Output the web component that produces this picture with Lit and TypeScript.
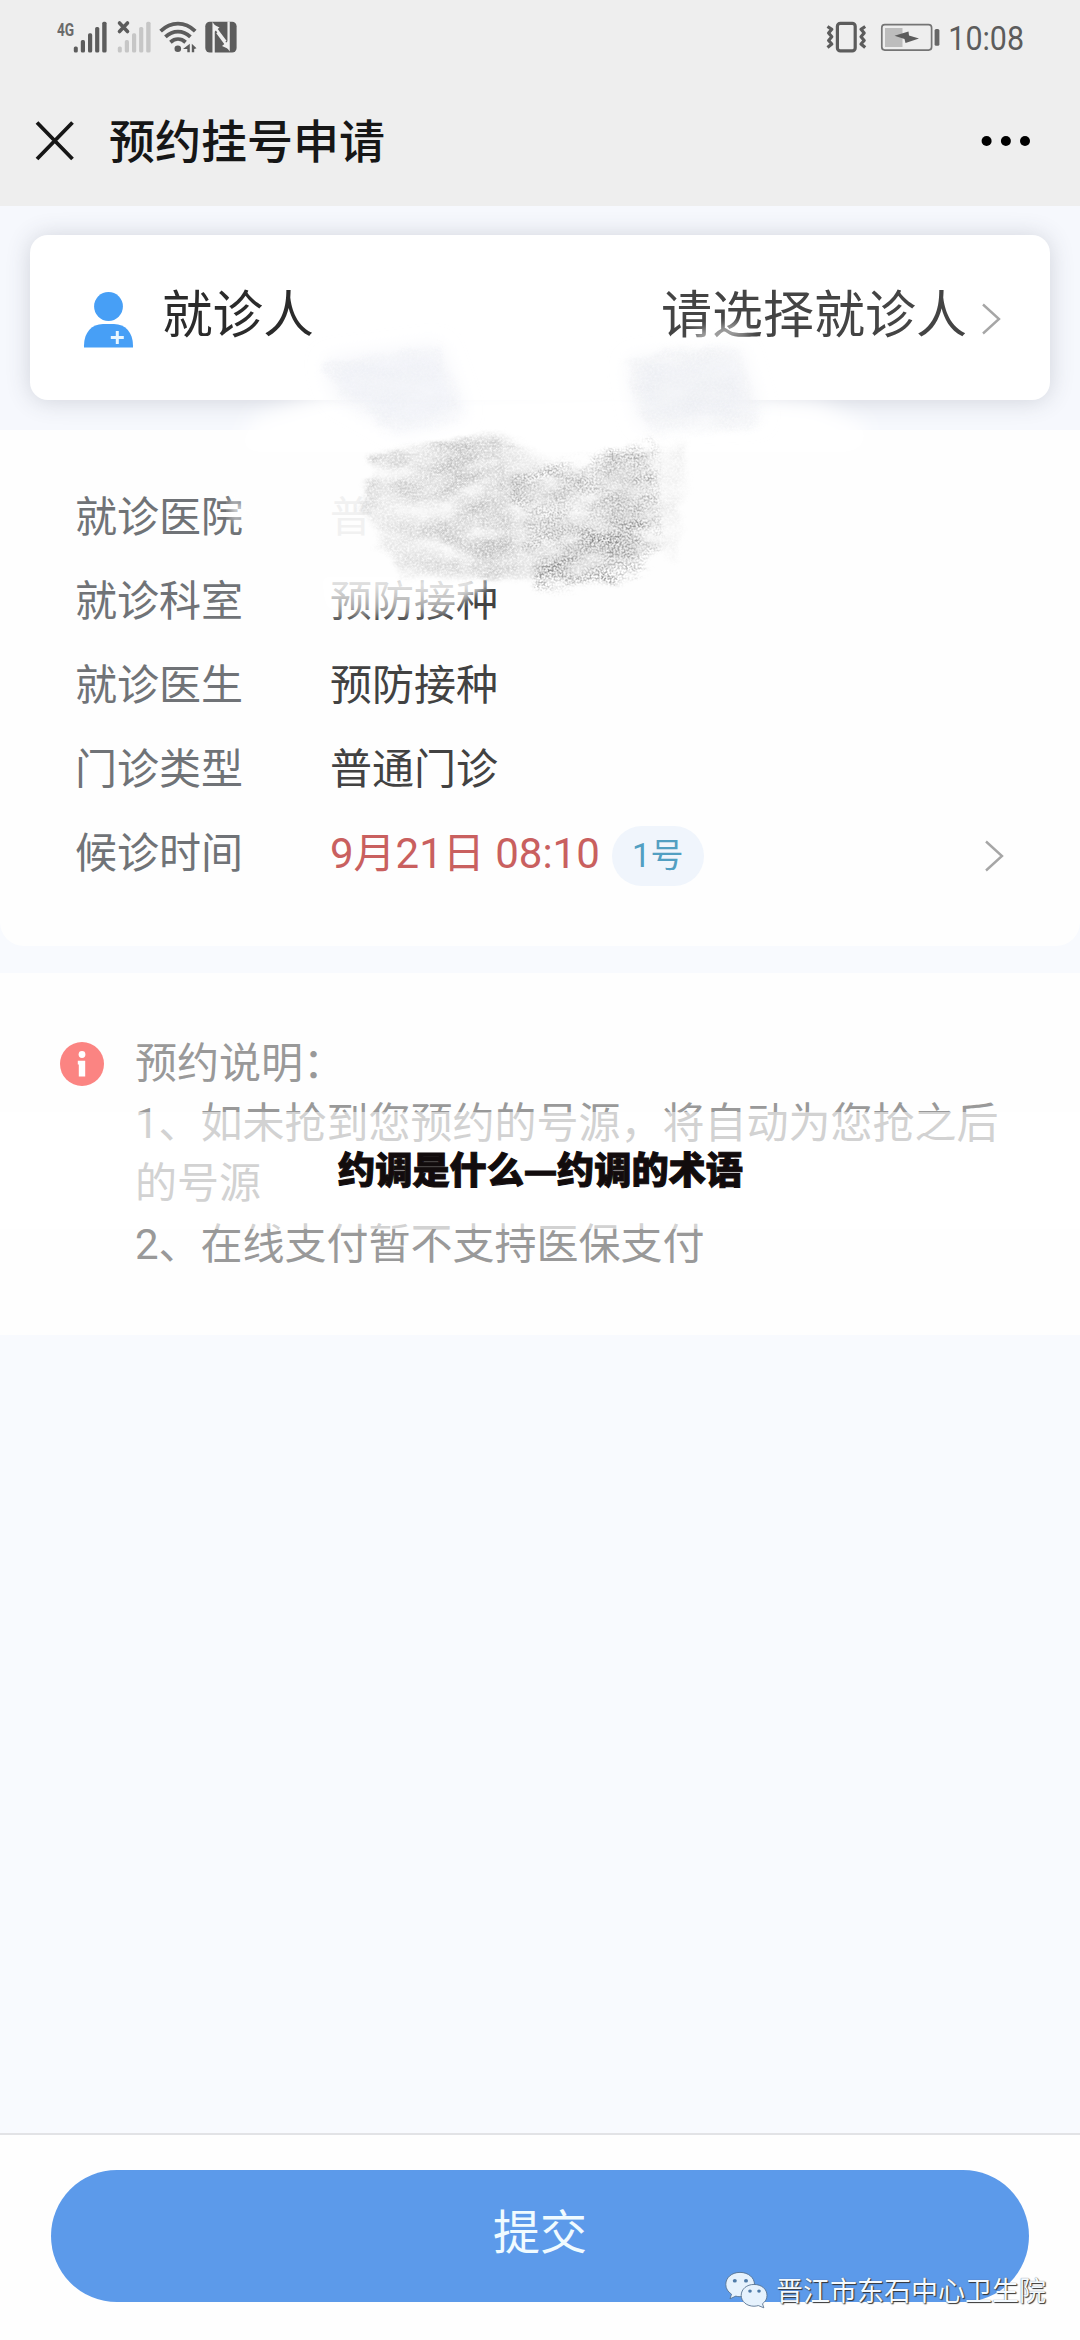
import { LitElement, html, css, svg } from "lit";
import { customElement, property } from "lit/decorators.js";

const bars = (fill: string) => svg`
  <g fill=${fill}>
    <rect x="0" y="24.8" width="4" height="6" rx="1.6"/>
    <rect x="7" y="18.4" width="4.2" height="12.4" rx="1.6"/>
    <rect x="14.2" y="11.6" width="4.2" height="19.2" rx="1.6"/>
    <rect x="21.3" y="5.2" width="4.2" height="25.6" rx="1.6"/>
    <rect x="28.4" y="0" width="4.4" height="30.8" rx="1.6"/>
  </g>`;

@customElement("status-bar")
class StatusBar extends LitElement {
  static styles = css`
    :host { display: flex; height: 76px; box-sizing: border-box; padding: 0 40px 0 57px; justify-content: space-between; }
    svg { display: block; }
    .clock { font-family: Roboto, sans-serif; }
  `;
  render() {
    return html`
      <svg width="184" height="76" viewBox="57 0 184 76">
        <text class="clock" transform="translate(57 35.6) scale(.74 1)" font-size="18.5" font-weight="700" fill="#6a6a6a">4G</text>
        <g transform="translate(73.8 21.7)">${bars("#5c5c5c")}</g>
        <g transform="translate(117.8 21.7)">${bars("#c6c6c6")}</g>
        <path d="M119.5 23 127.5 31.5M127.5 23 119.5 31.5" stroke="#5c5c5c" stroke-width="3.6" stroke-linecap="round"/>
        <g fill="none" stroke="#5c5c5c" stroke-width="3.8">
          <path d="M160.6 31.2C171 21.2 185 21.2 195.2 31.2"/>
          <path d="M165.4 36.8C173 29.8 183 29.8 190.4 36.8"/>
          <path d="M170.4 42.2C175 38.2 181 38.2 185.6 42.2"/>
        </g>
        <circle cx="177.8" cy="48.7" r="3.3" fill="#5c5c5c"/>
        <path d="M183 49 189.8 43.8V52.2H187.3V49ZM191.8 43.8 196.5 48.2 194.2 49V52.2H191.8Z" fill="#5c5c5c"/>
        <rect x="205.3" y="21.7" width="31.3" height="30.8" rx="4.5" fill="#5c5c5c"/>
        <path d="M213.6 53V25.5L225.6 41.5M228.6 21.5V48L217.2 32.5" fill="none" stroke="#efefef" stroke-width="2.3"/>
        <path d="M214 24.8 219.5 27.5 214 32Z" fill="#efefef"/>
        <path d="M228.6 49 222 46 228 41Z" fill="#efefef"/>
      </svg>
      <svg width="214" height="76" viewBox="826 0 214 76">
        <rect x="837.4" y="23.3" width="17.8" height="27.6" rx="3" fill="none" stroke="#5c5c5c" stroke-width="3.2"/>
        <g fill="none" stroke="#5c5c5c" stroke-width="3.2" stroke-linejoin="round">
          <path d="M827.5 26.5 831.8 29.3 828.6 33 831.8 36.8 828.6 40.5 831.8 44 827.5 47.5"/>
          <path d="M865.2 26.5 861 29.3 864.2 33 861 36.8 864.2 40.5 861 44 865.2 47.5"/>
        </g>
        <rect x="881.8" y="24.7" width="49.8" height="25.4" rx="3" fill="none" stroke="#747474" stroke-width="1.7"/>
        <rect x="885" y="28" width="17.5" height="19" fill="#bdbdbd"/>
        <path d="M894.5 35.8 908.5 31.4 909 35.6 919 38.6 905.5 43 904.5 38.9Z" fill="#5c5c5c"/>
        <rect x="934.6" y="29" width="4.8" height="16.8" rx="1.6" fill="#666"/>
        <text class="clock" transform="translate(948.3 50) scale(.895 1)" font-size="34" fill="#5c5c5c">10:08</text>
      </svg>`;
  }
}

@customElement("title-bar")
class TitleBar extends LitElement {
  static styles = css`
    :host { display: flex; align-items: center; height: 129px; box-sizing: border-box; padding: 2px 49px 0 35px; }
    .title { flex: 1; margin-left: 34px; font-size: 46px; font-weight: 500; color: #161616; line-height: 60px; }
    svg { display: block; margin-bottom: 2px; }
  `;
  render() {
    return html`
      <svg width="40" height="40" viewBox="0 0 40 40"><path d="M2 1.5 37.5 38M37.5 1.5 2 38" stroke="#161616" stroke-width="3.8"/></svg>
      <span class="title">预约挂号申请</span>
      <svg width="50" height="12" viewBox="0 0 50 12"><circle cx="5.6" cy="6" r="5"/><circle cx="24.9" cy="6" r="5"/><circle cx="44" cy="6" r="5"/></svg>`;
  }
}

const chevron = html`<svg class="chevron" width="20" height="32" viewBox="0 0 20 32"><path d="M2 1.5 18 16 2 30.5" fill="none" stroke="#a6a6a6" stroke-width="2.4"/></svg>`;

@customElement("patient-card")
class PatientCard extends LitElement {
  static styles = css`
    :host { display: flex; align-items: center; height: 165px; margin: 29px 30px 30px; box-sizing: border-box; padding: 0 49px 0 53px;
      background: #fff; border-radius: 18px; box-shadow: 0 1px 24px rgba(60, 64, 80, .2); }
    .label { flex: 1; margin-left: 28px; font-size: 50.6px; color: #2b2b2b; line-height: 70px; padding-bottom: 3px; }
    .pick { font-size: 51px; color: #444; line-height: 70px; padding-bottom: 3px; margin-right: 14px; }
    svg { display: block; }
    .chevron { margin-top: 3px; }
  `;
  render() {
    return html`
      <svg width="51" height="60" viewBox="83 287.5 51 60">
        <circle cx="108.5" cy="306" r="14.4" fill="#479ff6"/>
        <path d="M84 347V345C84 332 92 323.6 103 323.6H114C125 323.6 133 332 133 345V347Z" fill="#479ff6"/>
        <path d="M117.3 330.5V343.5M110.8 337H123.8" stroke="#e9f6ff" stroke-width="3"/>
      </svg>
      <span class="label">就诊人</span>
      <span class="pick">请选择就诊人</span>
      ${chevron}`;
  }
}

@customElement("detail-row")
class DetailRow extends LitElement {
  @property() label = "";
  @property() value = "";
  @property() tone = "";
  @property() badge = "";
  static styles = css`
    :host { display: flex; align-items: center; height: 84px; font-size: 42px; }
    .label { width: 255px; color: #707377; }
    .value { color: #424242; }
    .ghost { color: #f1f1f1; }
    .time { color: #c9605f; }
    .badge { height: 60px; width: 92px; margin-left: 12px; border-radius: 30px; background: #f0f5fc; color: #529fc2;
      font-size: 33px; line-height: 60px; text-align: center; margin-top: 13px; }
    .chevron { margin: 14px 0 0 auto; display: block; }
  `;
  render() {
    return html`
      <span class="label">${this.label}</span>
      <span class="value ${this.tone}">${this.value}</span>
      ${this.badge ? html`<span class="badge">${this.badge}</span>${chevron}` : null}`;
  }
}

@customElement("pencil-smudge")
class PencilSmudge extends LitElement {
  static styles = css`
    :host { position: absolute; left: 220px; top: 310px; width: 660px; height: 320px; pointer-events: none; }
    svg { display: block; }
  `;
  render() {
    return html`
      <svg width="660" height="320" viewBox="220 310 660 320">
        <defs>
          <filter id="soft" x="-20%" y="-40%" width="140%" height="180%"><feGaussianBlur stdDeviation="10"/></filter>
          <filter id="soft-s" x="-20%" y="-60%" width="140%" height="220%"><feGaussianBlur stdDeviation="4"/></filter>
          <filter id="grain" x="-10%" y="-10%" width="120%" height="120%" color-interpolation-filters="sRGB">
            <feTurbulence type="fractalNoise" baseFrequency="0.025 0.05" numOctaves="3" seed="4" result="wide"/>
            <feTurbulence type="fractalNoise" baseFrequency="0.4 0.5" numOctaves="2" seed="9" result="fine"/>
            <feGaussianBlur in="SourceGraphic" stdDeviation="3" result="b"/>
            <feDisplacementMap in="b" in2="wide" scale="20" xChannelSelector="R" yChannelSelector="G" result="d"/>
            <feColorMatrix in="wide" type="matrix" values="0 0 0 0 0 0 0 0 0 0 0 0 0 0 0 1.6 0 0 0 -0.15" result="wa"/>
            <feColorMatrix in="fine" type="matrix" values="0 0 0 0 0 0 0 0 0 0 0 0 0 0 0 1.8 0 0 0 -0.2" result="fa"/>
            <feComposite in="d" in2="wa" operator="in" result="dw"/>
            <feComposite in="dw" in2="fa" operator="in"/>
          </filter>
          <filter id="speck" x="-10%" y="-10%" width="120%" height="120%" color-interpolation-filters="sRGB">
            <feTurbulence type="fractalNoise" baseFrequency="0.03 0.06" numOctaves="4" seed="21" result="wide"/>
            <feTurbulence type="fractalNoise" baseFrequency="0.5" numOctaves="2" seed="5" result="fine"/>
            <feGaussianBlur in="SourceGraphic" stdDeviation="3" result="b"/>
            <feDisplacementMap in="b" in2="wide" scale="22" xChannelSelector="R" yChannelSelector="G" result="d"/>
            <feColorMatrix in="wide" type="matrix" values="0 0 0 0 0 0 0 0 0 0 0 0 0 0 0 2 0 0 0 -0.5" result="wa"/>
            <feColorMatrix in="fine" type="matrix" values="0 0 0 0 0 0 0 0 0 0 0 0 0 0 0 3.6 0 0 0 -1.4" result="fa"/>
            <feComposite in="d" in2="wa" operator="in" result="dw"/>
            <feComposite in="dw" in2="fa" operator="in"/>
          </filter>
          <linearGradient id="fade" x1="0" y1="0" x2="0" y2="1">
            <stop offset="0" stop-color="#fff" stop-opacity=".95"/>
            <stop offset=".5" stop-color="#fff" stop-opacity=".7"/>
            <stop offset="1" stop-color="#fff" stop-opacity=".35"/>
          </linearGradient>
        </defs>
        <path d="M256 418 330 392 620 382 820 404 870 430 860 452H235Z" fill="#fff" filter="url(#soft)"/>
        <path d="M230 496 250 512 232 524Z" fill="#fff" opacity=".7" filter="url(#soft-s)"/>
        <path d="M690 332 738 322 752 334 700 346Z" fill="#fff" opacity=".5" filter="url(#soft-s)"/>
        <g filter="url(#soft)">
          <path d="M325 360 440 345 465 415 400 432 335 395Z" fill="#eff1f8" opacity=".65"/>
          <path d="M628 360 740 350 760 420 640 425Z" fill="#f1f2f6" opacity=".7"/>
        </g>
        <g filter="url(#grain)">
          <path d="M325 360 440 345 465 415 400 432 335 398Z" fill="#dfe2ec" opacity=".25"/>
          <path d="M620 358 735 345 760 425 650 435Z" fill="#dfe1e8" opacity=".35"/>
          <path d="M370 456 500 433 560 470 650 450 658 548 580 578 400 582 385 545 365 512Z" fill="#d2d2d2" opacity=".8"/>
          <path d="M370 456 500 434 520 575 440 580 420 500 372 500Z" fill="#c9c9c9" opacity=".7"/>
          <path d="M440 482 505 465 520 570 450 578Z" fill="#bcbcbc" opacity=".7"/>
          <path d="M655 445 688 442 676 560 655 550Z" fill="#d8d8d8" opacity=".45"/>
          <path d="M372 456 500 434 503 456 400 474Z" fill="#bcbcbc" opacity=".7"/>
        </g>
        <g filter="url(#speck)">
          <path d="M510 472 655 442 660 545 620 582 535 588Z" fill="#999" opacity=".7"/>
          <path d="M632 446 657 442 661 550 632 556Z" fill="#808080" opacity=".7"/>
          <path d="M540 535 658 525 640 575 540 588Z" fill="#808080" opacity=".75"/>
        </g>
        <path d="M322 576H470L492 584 466 600 446 614 322 618Z" fill="url(#fade)" filter="url(#soft-s)"/>
      </svg>`;
  }
}

@customElement("app-root")
class AppRoot extends LitElement {
  static styles = css`
    :host { display: flex; flex-direction: column; position: relative; width: 1080px; height: 2340px; overflow: hidden;
      background: #f8fafe; font-family: Roboto, "Noto Sans CJK SC", sans-serif; }
    .top { background: #eee; height: 206px; flex: none; }
    .patient { display: flow-root; background: #f6f8fd; flex: none; height: 224px; }
    .details { flex: none; height: 516px; box-sizing: border-box; padding: 41px 76px 0 75px; background: #fefefe;
      border-radius: 0 0 24px 24px; }
    .notes { flex: none; display: flex; height: 362px; margin-top: 27px; box-sizing: border-box; padding: 61px 60px 0; background: #fefefe; }
    .info { display: block; margin-top: 8px; flex: none; }
    .copy { margin-left: 31px; font-size: 42px; line-height: 60.2px; color: #999; width: 880px; }
    .copy p { margin: 0; }
    .footer { flex: none; margin-top: auto; height: 207px; box-sizing: border-box; border-top: 2px solid #e2e3e6; background: #fefefe; padding: 35px 51px 0; }
    .submit { display: block; width: 100%; height: 132px; border: 0; border-radius: 66px; background: #5c9aea; color: #f0fbff;
      font: inherit; font-size: 47px; line-height: 126px; padding: 0 0 6px; }
    .veil { position: absolute; left: 0; right: 0; top: 1112px; height: 117px; background: rgba(255, 255, 255, .56); }
    .caption { position: absolute; left: 300px; right: 299px; top: 1141px; white-space: nowrap; font-family: "Noto Sans CJK SC", sans-serif;
      font-size: 37.2px; line-height: 54px; font-weight: 900; color: #120c0d; -webkit-text-stroke: 1px #120c0d;
      display: flex; justify-content: center; }
    .dash { width: 33px; display: flex; justify-content: center; }
    .mark { position: absolute; left: 725px; top: 2268px; display: flex; align-items: center; gap: 8px; }
    .mark span { font-size: 27px; line-height: 42px; color: #f4faff; text-shadow: 1px 1px 1px #333, 0 0 1px #556; padding-top: 3px; white-space: nowrap; }
    .mark svg { display: block; margin-bottom: 2px; }
  `;
  render() {
    return html`
      <div class="top"><status-bar></status-bar><title-bar></title-bar></div>
      <div class="patient"><patient-card></patient-card></div>
      <div class="details">
        <detail-row label="就诊医院" value="普" tone="ghost"></detail-row>
        <detail-row label="就诊科室" value="预防接种"></detail-row>
        <detail-row label="就诊医生" value="预防接种"></detail-row>
        <detail-row label="门诊类型" value="普通门诊"></detail-row>
        <detail-row label="候诊时间" value="9月21日 08:10" tone="time" badge="1号"></detail-row>
      </div>
      <div class="notes">
        <svg class="info" width="44" height="44" viewBox="0 0 44 44">
          <circle cx="22" cy="22" r="22" fill="#fb8482"/>
          <circle cx="22" cy="12.5" r="3.4" fill="#fff"/>
          <path d="M17.8 18.8H25.2V34.5H18.8V22.6H17.8Z" fill="#fff"/>
        </svg>
        <div class="copy">
          <p>预约说明：</p>
          <p>1、如未抢到您预约的号源，将自动为您抢之后</p>
          <p>的号源</p>
          <p>2、在线支付暂不支持医保支付</p>
        </div>
      </div>
      <div class="footer"><button class="submit">提交</button></div>
      <pencil-smudge></pencil-smudge>
      <div class="veil"></div>
      <div class="caption"><span>约调是什么</span><span class="dash">—</span><span>约调的术语</span></div>
      <div class="mark">
        <svg width="43" height="38" viewBox="0 1.5 43 41" preserveAspectRatio="none">
          <g stroke="#55708f" stroke-width=".9">
            <path d="M15 3C6.5 3 .8 8.8 .8 16C.8 20.5 3 24 6.5 26.5L5 31.5 10.8 28.6C12 29 13.5 29.2 15 29.2C23.5 29.2 29.5 23.3 29.5 16C29.5 8.8 23.5 3 15 3Z" fill="#e6f2fd"/>
            <path d="M29 16C21.8 16 16.2 21 16.2 27.8C16.2 34.5 21.8 39.5 29 39.5C30.5 39.5 32 39.2 33.3 38.8L38.8 41.2 37.5 36.8C40.5 34.6 42 31.5 42 27.8C42 21 36.5 16 29 16Z" fill="#e6f2fd"/>
          </g>
          <g fill="#4f7ba8"><circle cx="9.8" cy="12" r="2"/><circle cx="21" cy="12" r="2"/><circle cx="25" cy="23.2" r="1.8"/><circle cx="34" cy="23.2" r="1.8"/></g>
        </svg>
        <span>晋江市东石中心卫生院</span>
      </div>`;
  }
}
